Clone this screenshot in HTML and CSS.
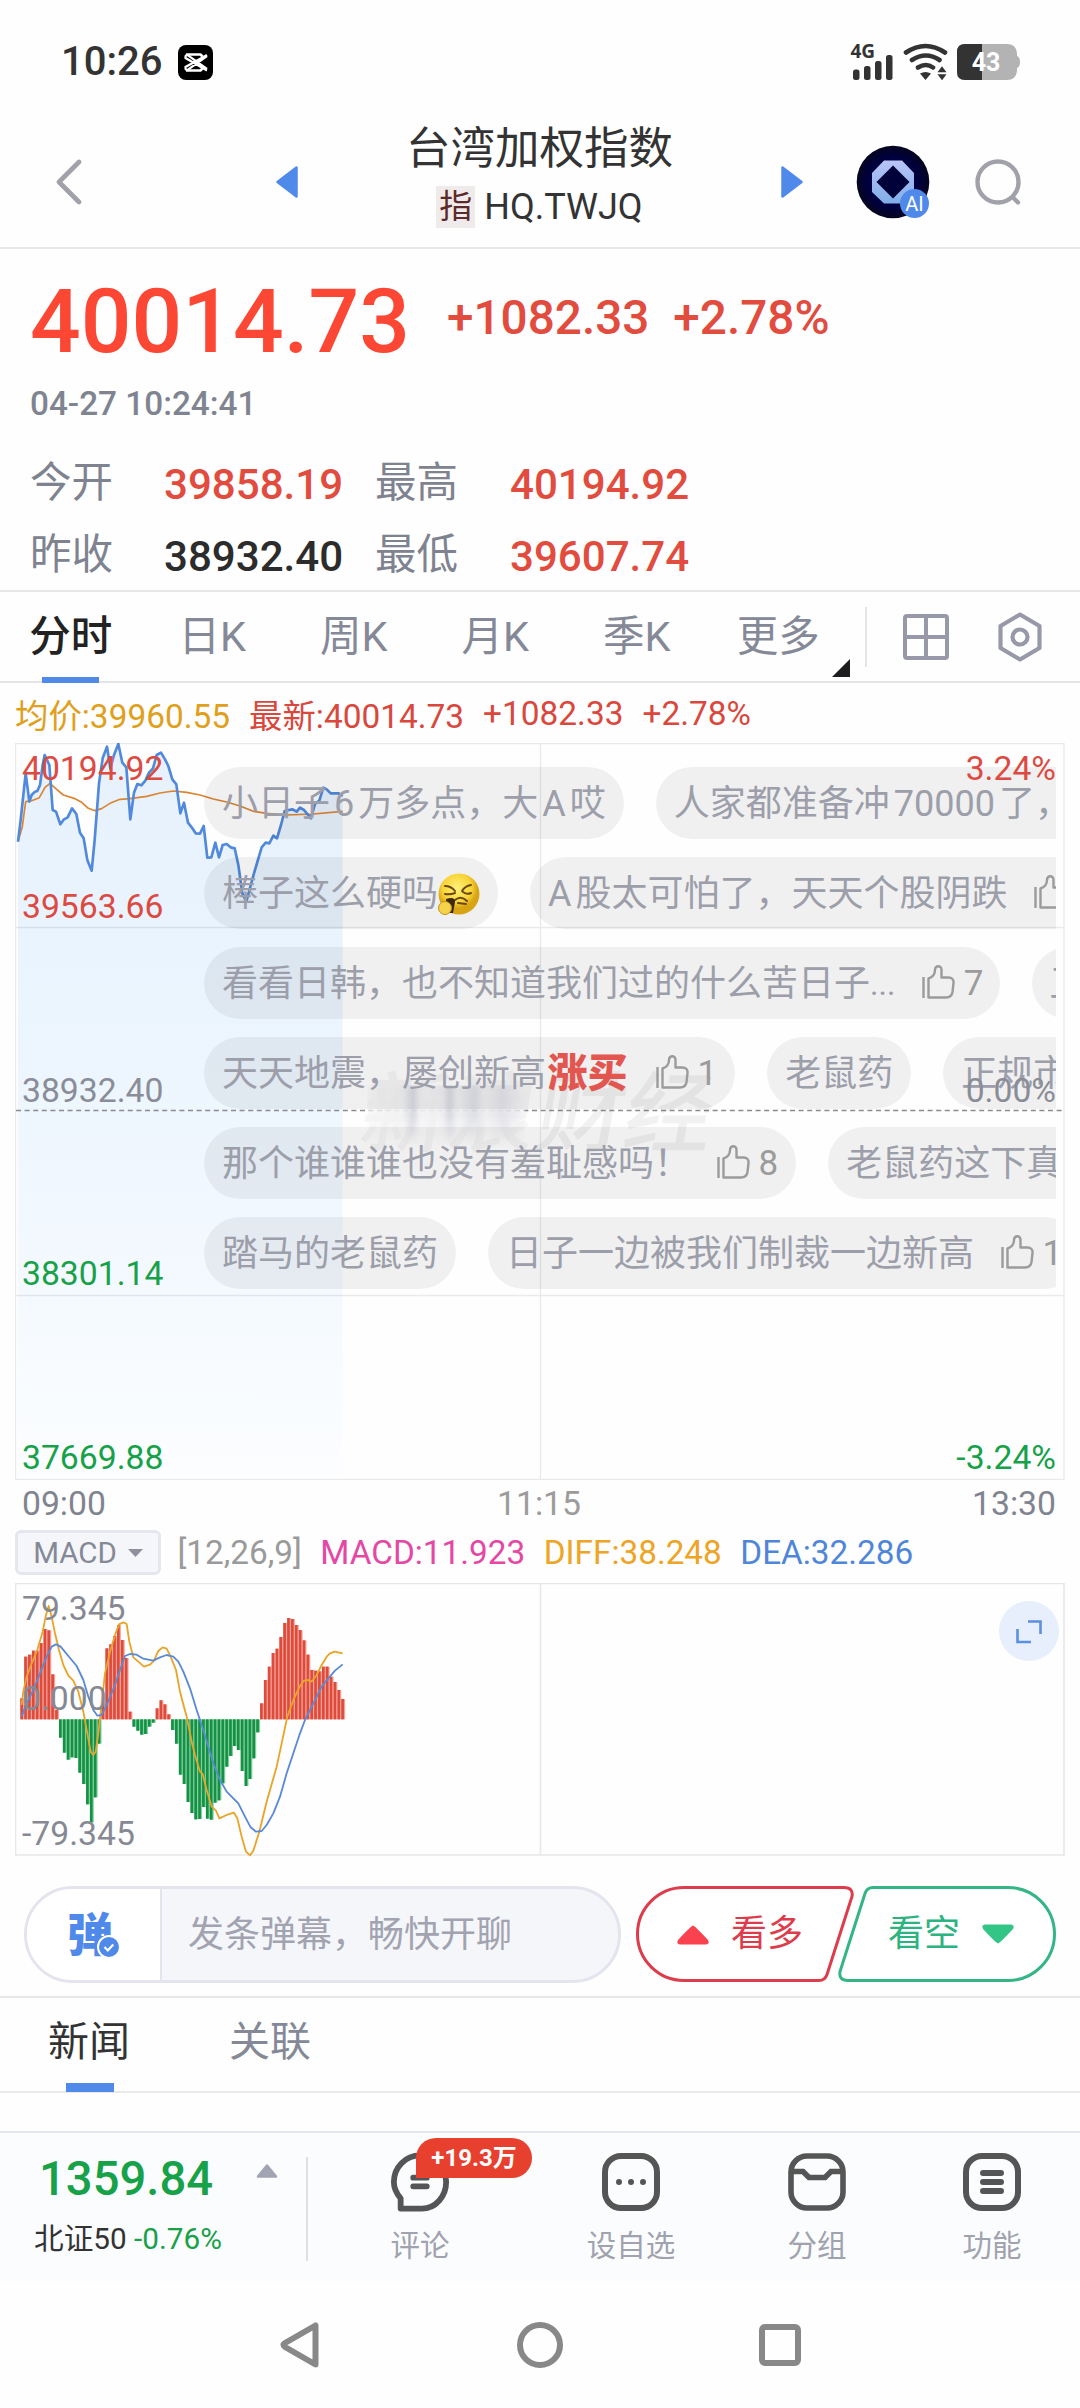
FILE: index.html
```html
<!DOCTYPE html>
<html lang="zh-CN">
<head>
<meta charset="utf-8">
<title>台湾加权指数</title>
<link rel="stylesheet" href="styles.css">
</head>
<body>
<svg width="0" height="0" class="defs">
  <symbol id="thumb" viewBox="0 0 33 34">
    <path d="M1.500 12v21M6.500 13.500v19H24c3.500 0 6-2 6.500-5.500l1-9c.4-3.500-1.500-5.500-5-5.500H19.500V5c0-5-6.500-5-6.500 0 0 4-2 7-6.500 8.500z" fill="none" stroke="#9b9b9b" stroke-width="2.400" stroke-linejoin="round"/>
  </symbol>
</svg>
<div class="phone">
  <div class="status">
    <span class="clock">10:26</span>
    <svg class="capcut" width="35" height="35" viewBox="0 0 35 35"><rect width="35" height="35" rx="8"/><path d="M29 11L10 24.500a1.500 1.500 0 0 1-2.500-1.200V22l21.500-12M29 24L10 10.500a1.500 1.500 0 0 0-2.500 1.200V13L29 25.500" fill="none" stroke="#fff" stroke-width="2.200"/><path d="M8 9.500h14.500l2 2M8 25.500h14.500l2-2" fill="none" stroke="#fff" stroke-width="2.600"/></svg>
    <span class="grow"></span>
    <svg width="170" height="40" viewBox="850 42 170 40">
      <text x="850.500" y="58" class="net">4G</text>
      <g fill="#333"><rect x="853" y="69.500" width="6.500" height="10.500" rx="2.500"/><rect x="864" y="66" width="6.500" height="14" rx="2.500"/><rect x="875" y="61" width="6.500" height="19" rx="2.500"/><rect x="886" y="55" width="6.500" height="25" rx="2.500"/></g>
      <g fill="none" stroke="#333" stroke-width="4.600" stroke-linecap="round"><path d="M906 52.500q19.500-13 39 0M912 60q14-9 27.500 0M918 67.500q8-5 15 0"/></g>
      <path d="M920 73.500q5.500-3 11 0l-5.500 6.500zM942 72l5-6 5 6zM942 74l5 6 5-6z" transform="translate(-5 0)" fill="#333" class="hide"/>
      <path d="M920 73.500q5.500-3 11 0l-5.500 6.500zM937.500 72.200l4.500-6 4.500 6zM937.500 74.200l4.500 6 4.500-6z" fill="#333"/>
      <path d="M965 44h42q9 0 10 9v3q3 1 3 6t-3 6v3q-1 9-10 9h-42q-8 0-8-8V52q0-8 8-8z" fill="#b3b3b3"/>
      <path d="M982 44h-17q-8 0-8 8v20q0 8 8 8h17z" fill="#333"/>
      <text x="986" y="71" class="batt">43</text>
    </svg>
  </div>

  <header class="head">
    <svg class="back" width="28" height="46" viewBox="0 0 28 46"><path d="M24 3L4 23l20 20" fill="none" stroke="#a0a1a9" stroke-width="4.600" stroke-linecap="round" stroke-linejoin="round"/></svg>
    <svg class="prev" width="22" height="32" viewBox="0 0 22 32"><path d="M20.500 1.500v29L1.500 16z" fill="#4f8aea" stroke="#4f8aea" stroke-width="2.500" stroke-linejoin="round"/></svg>
    <div class="name">
      <h1>台湾加权指数</h1>
      <div class="code"><i>指</i>HQ.TWJQ</div>
    </div>
    <svg class="next" width="22" height="32" viewBox="0 0 22 32"><path d="M1.500 1.500v29L20.500 16z" fill="#4f8aea" stroke="#4f8aea" stroke-width="2.500" stroke-linejoin="round"/></svg>
    <svg class="ai" width="74" height="74" viewBox="0 0 74 74">
      <defs><linearGradient id="oct" x2="0" y2="1"><stop stop-color="#b9c4f8"/><stop offset="1" stop-color="#80aee8"/></linearGradient><radialGradient id="sky"><stop stop-color="#02023c"/><stop offset=".7" stop-color="#00003f"/><stop offset="1" stop-color="#05051f"/></radialGradient></defs>
      <circle cx="37" cy="37" r="36.300" fill="url(#sky)"/>
      <path d="M28 15.500h18L58 28v19L46 58.500H28L16 47V28z" fill="url(#oct)"/><path d="M37 20.500L53.500 37 37 53.500 20.500 37z" fill="#02023a"/>
      <circle cx="58.500" cy="58.500" r="14.500" fill="#4f8aea"/><text x="58.500" y="65.500" class="aitxt">AI</text>
    </svg>
    <svg class="search" width="48" height="48" viewBox="0 0 48 48"><g fill="none" stroke="#a0a1a9" stroke-width="4.400" stroke-linecap="round"><circle cx="24" cy="24" r="20.500"/><path d="M39 39.500l5 5"/></g></svg>
  </header>

  <section class="quote">
    <div class="top"><b>40014.73</b><span>+1082.33</span><span>+2.78%</span></div>
    <time>04-27 10:24:41</time>
    <dl>
      <dt>今开</dt><dd>39858.19</dd><dt>最高</dt><dd>40194.92</dd>
      <dt>昨收</dt><dd class="dark">38932.40</dd><dt>最低</dt><dd>39607.74</dd>
    </dl>
  </section>

  <nav class="tabs">
    <a class="on">分时</a><a>日K</a><a>周K</a><a>月K</a><a>季K</a><a>更多</a>
    <svg class="corner" width="18" height="18"><path d="M18 0v18H0z" fill="#1d1d1f"/></svg>
    <s></s>
    <svg class="grid" width="48" height="48" viewBox="0 0 48 48"><path d="M5 3h38q2 0 2 2v38q0 2-2 2H5q-2 0-2-2V5q0-2 2-2zM24 3v42M3 24h42" fill="none" stroke="#9799a8" stroke-width="4"/></svg>
    <svg class="hex" width="46" height="50" viewBox="0 0 46 50"><g fill="none" stroke="#9799a8" stroke-width="4.200" stroke-linejoin="round"><path d="M23 2.500L42.500 14v22L23 47.500 3.500 36V14z"/><circle cx="23" cy="25" r="7.500"/></g></svg>
  </nav>

  <div class="legend"><span class="gold">均价:39960.55</span><span>最新:40014.73</span><span>+1082.33</span><span>+2.78%</span></div>

  <section class="chart">
    <svg width="1050" height="737" viewBox="15 743 1050 737">
      <defs><linearGradient id="area" gradientUnits="userSpaceOnUse" x1="0" y1="0" x2="0" y2="2240"><stop stop-color="#e6f1fc"/><stop offset=".3" stop-color="#e9f4fe"/><stop offset=".75" stop-color="#f4f9ff"/><stop offset=".9" stop-color="#f9fcff"/><stop offset="1" stop-color="#fcfdff"/></linearGradient></defs>
      <g transform="translate(0 730) scale(.33333)" fill="none" stroke-linejoin="round">
        <path fill="url(#area)" d="M54,335 62,270 77,130 88,215 95,195 105,185 112,183 120,165 128,105 134,75 140,88 148,105 158,240 168,245 181,283 192,268 203,262 216,235 229,252 240,308 251,325 262,390 275,422 284,330 297,160 308,85 321,50 331,115 342,75 355,42 367,98 379,112 391,268 402,188 412,162 424,166 436,152 447,128 459,115 470,75 483,68 495,88 505,108 517,148 529,163 541,250 552,218 564,278 575,292 587,310 600,311 611,288 622,383 634,382 646,338 657,382 668,345 680,342 692,352 704,355 715,405 727,490 739,515 751,470 762,430 785,352 797,338 808,340 820,317 831,325 843,285 854,243 866,240 878,238 890,245 900,233 912,240 933,265 945,222 958,212 970,173 980,178 992,190 1004,190 1016,190 1028,198V2240H54z"/>
        <path stroke="#db8532" stroke-width="5" d="M54,335 67,290 77,215 95,212 118,203 135,172 150,160 170,178 190,195 225,206 245,217 265,235 285,242 305,236 330,220 360,208 390,206 440,199 480,189 520,183 560,187 600,195 640,207 680,216 720,228 760,244 800,250 860,255 940,252 1028,244"/>
        <path stroke="#5189dc" stroke-width="8" d="M54,335 62,270 77,130 88,215 95,195 105,185 112,183 120,165 128,105 134,75 140,88 148,105 158,240 168,245 181,283 192,268 203,262 216,235 229,252 240,308 251,325 262,390 275,422 284,330 297,160 308,85 321,50 331,115 342,75 355,42 367,98 379,112 391,268 402,188 412,162 424,166 436,152 447,128 459,115 470,75 483,68 495,88 505,108 517,148 529,163 541,250 552,218 564,278 575,292 587,310 600,311 611,288 622,383 634,382 646,338 657,382 668,345 680,342 692,352 704,355 715,405 727,490 739,515 751,470 762,430 785,352 797,338 808,340 820,317 831,325 843,285 854,243 866,240 878,238 890,245 900,233 912,240 933,265 945,222 958,212 970,173 980,178 992,190 1004,190 1016,190 1028,198"/>
      </g>
      <path d="M15.500 743.500h1048.500v736H15.500zM15.500 927.500h1048.500M15.500 1295.500h1048.500M540.500 743.500v736" fill="none" stroke="#000" stroke-opacity=".08" stroke-width="1.400"/>
      <path d="M16 1110.500h1048" stroke="#8a8a90" stroke-width="1.600" stroke-dasharray="5 3.600"/>
    </svg>
    <div class="mark"><span class="faint">新浪</span><span>财经</span><i></i></div>
    <div class="danmu">
      <div><p>小日子<u>6</u>万多点，大<u>A</u>哎</p><p>人家都准备冲<u>70000</u>了，<em>这</em></p></div>
      <div><p>棒子这么硬吗<svg class="emoji" width="42" height="42" viewBox="0 0 42 42"><defs><radialGradient id="face" cx=".45" cy=".35"><stop stop-color="#fff27a"/><stop offset=".7" stop-color="#f8d437"/><stop offset="1" stop-color="#d9a413"/></radialGradient></defs><circle cx="21" cy="21" r="20.500" fill="url(#face)"/><g fill="none" stroke="#6c4710" stroke-width="2" stroke-linecap="round"><path d="M7 13q6 0 10 5M33 12q-6 1-9 6M7 21q5 1 10-1M25 19q4 3 8 1M17 27q6-5 12 1M20 30l8 1"/></g><path d="M8 26q9-3 9 3l-2 11H9z" fill="#3b2712"/><circle cx="7" cy="35" r="6.500" fill="#f5d24a" stroke="#c29019"/></svg></p><p><u class="first">A</u>股太可怕了，天天个股阴跌<svg class="like"><use href="#thumb"/></svg><b>3</b></p></div>
      <div><p>看看日韩，也不知道我们过的什么苦日子<tt>...</tt><svg class="like"><use href="#thumb"/></svg><b>7</b></p><p>卫星</p></div>
      <div><p>天天地震，屡创新高<strong>涨买</strong><svg class="like"><use href="#thumb"/></svg><b>1</b></p><p>老鼠药</p><p>正规市场</p></div>
      <div><p>那个谁谁谁也没有羞耻感吗！<svg class="like"><use href="#thumb"/></svg><b>8</b></p><p>老鼠药这下真香</p></div>
      <div><p>踏马的老鼠药</p><p>日子一边被我们制裁一边新高<svg class="like"><use href="#thumb"/></svg><b>1</b></p></div>
    </div>
    <ul class="ylab">
      <li class="red">40194.92</li><li class="red">39563.66</li><li>38932.40</li><li class="green">38301.14</li><li class="green">37669.88</li>
    </ul>
    <ul class="plab"><li class="red">3.24%</li><li>0.00%</li><li class="green">-3.24%</li></ul>
  </section>
  <div class="times"><span>09:00</span><span>11:15</span><span>13:30</span></div>

  <div class="ind">
    <div class="pick">MACD<svg width="15" height="8"><path d="M0 0h15l-7.500 8z" fill="#8e909c"/></svg></div>
    <span>[12,26,9]</span><span class="pink">MACD:11.923</span><span class="orange">DIFF:38.248</span><span class="blue">DEA:32.286</span>
  </div>

  <section class="macd">
    <svg width="1050" height="274" viewBox="15 1583 1050 274">
      <path d="M15.500 1583.500h1048.500v271.500H15.500zM540.500 1583.500v271" fill="none" stroke="#e7e7e9" stroke-width="1.600"/>
      <g transform="translate(0 1570) scale(.33333)" fill="none" stroke-width="5.500" stroke-linejoin="round">
        <g id="bars"></g>
        <path stroke="#e8a529" d="M65,405 70,365 80,320 95,280 112,240 128,185 138,135 146,108 155,140 165,190 177,240 190,285 205,317 220,332 235,365 250,425 262,490 272,545 280,555 287,545 295,490 305,400 315,310 330,245 345,195 357,163 370,157 380,162 388,215 400,262 415,275 432,290 450,284 462,272 475,243 488,232 500,236 512,260 528,300 540,365 560,440 575,515 585,555 600,605 608,612 620,660 635,710 648,722 658,745 680,735 702,728 712,745 725,800 738,845 750,856 760,842 778,785 800,695 830,590 845,520 862,440 880,390 900,348 912,332 925,330 935,335 950,315 965,285 980,260 990,250 1004,245 1028,250"/>
        <path stroke="#5a8ad6" d="M65,440 80,400 100,360 120,310 140,260 155,230 168,223 182,230 205,258 230,288 250,330 265,380 280,420 292,437 305,435 320,405 345,345 360,300 375,258 390,252 410,254 430,266 460,272 480,262 500,255 520,260 535,275 550,305 570,355 590,420 610,480 625,530 640,580 660,630 680,665 700,685 715,700 735,740 752,772 768,785 785,783 800,765 820,730 840,680 860,610 880,550 900,490 915,450 940,400 965,350 985,325 1005,302 1028,283"/>
      </g>
    </svg>
    <ul class="mlab"><li>79.345</li><li>0.000</li><li>-79.345</li></ul>
    <svg class="expand" width="60" height="60" viewBox="0 0 60 60"><circle cx="30" cy="30" r="30" fill="#e6effb"/><path d="M29 20.500h12.500V33M18.500 28v13H32" fill="none" stroke="#5b8fe0" stroke-width="2.600"/></svg>
  </section>

  <div class="actions">
    <div class="send">
      <div class="dm"><span>弹</span><svg width="24" height="24" viewBox="0 0 24 24"><circle cx="12" cy="12" r="11" fill="#4f8aea" stroke="#fff" stroke-width="2"/><path d="M7.500 12l3.300 3.500 5.500-6" fill="none" stroke="#fff" stroke-width="2.200"/></svg></div>
      <div class="hint">发条弹幕，畅快开聊</div>
    </div>
    <div class="vote bull">
      <svg width="218" height="96" viewBox="0 0 218 96"><path d="M48 1.500h160q9.500 0 8 9l-25 78q-2 6-8 6H48a46.500 46.500 0 0 1 0-93z" fill="#fff" stroke="#dc3c4b" stroke-width="3"/></svg>
      <div><svg width="34" height="21"><path d="M17 1.500Q18.500 1.500 32 16q2 4-2 4.500H4q-4-.5-2-4.500Q15.500 1.500 17 1.500z" fill="#f9414f"/></svg><span>看多</span></div>
    </div>
    <div class="vote bear">
      <svg width="218" height="96" viewBox="0 0 218 96"><path d="M170 94.500H10q-9.500 0-8-9l25-78q2-6 8-6H170a46.500 46.500 0 0 1 0 93z" fill="#fff" stroke="#33b585" stroke-width="3"/></svg>
      <div><span>看空</span><svg width="34" height="21"><path d="M17 19.500Q15.500 19.500 2 5 0 1 4 .5h26q4 .5 2 4.500Q18.500 19.500 17 19.500z" fill="#32c586"/></svg></div>
    </div>
  </div>

  <nav class="news"><a class="on">新闻</a><a>关联</a></nav>

  <footer class="bar">
    <div class="idx">
      <div><b>1359.84</b><svg width="22" height="14"><path d="M11 1.500L20 12.500H2z" fill="#a2a3b3" stroke="#a2a3b3" stroke-width="2.500" stroke-linejoin="round"/></svg></div>
      <p>北证50 <span>-0.76%</span></p>
    </div>
    <s></s>
    <div class="it c1"><svg width="62" height="62" viewBox="0 0 62 62" fill="none" stroke="#555" stroke-width="6"><path d="M11 58.500V48C6 42 4 37 4 31a26.500 27 0 0 1 54 0c0 15-11 27.500-25 27.500z" stroke-linejoin="round"/><path d="M24 26.500h14M24 35.500h14" stroke-linecap="round"/></svg><span>评论</span><em>+19.3万</em></div>
    <div class="it c2"><svg width="58" height="58" viewBox="0 0 58 58"><rect x="3" y="3" width="52" height="52" rx="16" fill="none" stroke="#555" stroke-width="6"/><g fill="#555"><circle cx="17" cy="29" r="3"/><circle cx="29" cy="29" r="3"/><circle cx="41" cy="29" r="3"/></g></svg><span>设自选</span></div>
    <div class="it c3"><svg width="58" height="58" viewBox="0 0 58 58" fill="none" stroke="#555" stroke-width="5.600"><rect x="3" y="3" width="52" height="52" rx="16"/><path d="M4 18.500h11l6 6h16l6-6h11"/></svg><span>分组</span></div>
    <div class="it c4"><svg width="58" height="58" viewBox="0 0 58 58" fill="none" stroke="#555" stroke-width="6"><rect x="3" y="3" width="52" height="52" rx="16"/><path d="M20 20h18M20 29h18M20 38h18" stroke-linecap="round"/></svg><span>功能</span></div>
  </footer>

  <div class="sys">
    <svg width="42" height="46" viewBox="0 0 42 46" fill="none" stroke="#888" stroke-width="6"><path d="M36.500 3.500v39L6 25q-3-2 0-4z" stroke-linejoin="round"/></svg>
    <svg width="46" height="46" viewBox="0 0 46 46" fill="none" stroke="#888" stroke-width="6"><circle cx="23" cy="23" r="20"/></svg>
    <svg width="42" height="42" viewBox="0 0 42 42" fill="none" stroke="#888" stroke-width="6"><rect x="3" y="3" width="36" height="36" rx="3"/></svg>
  </div>
</div>
<script src="script.js"></script>
</body>
</html>
```
FILE: styles.css
```css
* { box-sizing: border-box; margin: 0; padding: 0; }
body { width: 1080px; background: #fff; font-family: Roboto, "Noto Sans CJK SC", sans-serif; color: #333; }
svg { display: block; flex: none; }
.defs { position: absolute; }
.hide { display: none; }
ul { list-style: none; }
i, em { font-style: normal; }
s, u { text-decoration: none; }
.phone { width: 1080px; height: 2408px; display: flex; flex-direction: column; overflow: hidden; background: #fefefe; }
.phone > * { flex: none; }
.grow { flex: 1; }

.status { height: 114px; display: flex; align-items: center; padding: 10px 60px 0 61px; }
.clock { font-size: 40px; font-weight: 500; width: 117px; line-height: 40px; }
.net { font: 700 19px "Noto Sans", sans-serif; fill: #333; }
.batt { font: 700 25px Roboto, sans-serif; fill: #fff; text-anchor: middle; }
.aitxt { font: 400 20px Roboto, sans-serif; fill: #fff; text-anchor: middle; }

.head { height: 135px; border-bottom: 2px solid #e9e9ea; display: flex; align-items: center; padding: 2px 58px 0 55px; }
.prev { margin-left: 193px; }
.name { flex: 1; text-align: center; padding-bottom: 17px; }
.name h1 { font-size: 44.500px; font-weight: 400; line-height: 60px; }
.code { font-size: 36px; line-height: 42px; display: flex; justify-content: center; gap: 9px; margin-top: 7px; }
.code i { font-size: 33px; width: 39px; background: #f0ebeb; color: #5c2a2a; }
.next { margin-right: 53px; }
.search { margin-left: 44px; }

.quote { height: 343px; border-bottom: 2px solid #e7e7e8; padding-left: 30px; color: #e24c3f; }
.top { display: flex; align-items: center; height: 120px; padding-top: 26px; font-weight: 500; font-size: 47.700px; line-height: 80px; }
.top b { font-size: 89.300px; font-weight: 500; color: #fb4733; width: 417px; line-height: 94px; }
.top span { padding-bottom: 8px; margin-right: 24px; }
.quote time { display: block; font-size: 33.300px; font-weight: 500; color: #7f8590; line-height: 40px; margin-top: 15px; }
.quote dl { display: grid; grid-template-columns: 134px 211px 135px 260px; grid-auto-rows: 72px; margin-top: 23px; font-size: 41.500px; line-height: 72px; }
.quote dt { color: #7f8390; }
.quote dd { font-weight: 500; padding-top: 2px; font-size: 42.100px; }
.quote .dark { color: #2c2c2c; }

.tabs { height: 91px; border-bottom: 2px solid #e4e4e6; display: flex; align-items: center; font-size: 41.500px; color: #858997; }
.tabs a { width: 141.500px; text-align: center; line-height: 62px; white-space: nowrap; }
.tabs a.on { font-weight: 500; color: #222; position: relative; }
.tabs .on::after { content: ""; position: absolute; left: 42px; bottom: -15px; width: 57px; height: 6px; background: #4f8aea; }
.corner { margin: 67px 15px 0 -17px; align-self: flex-start; }
.tabs s { width: 2px; height: 60px; background: #e4e4e6; }
.grid { margin-left: 35px; }
.hex { margin-left: 47px; }

.legend { height: 60px; display: flex; align-items: center; gap: 19px; padding: 0 0 0 15px; font-size: 33.400px; color: #d9473d; }
.legend .gold { color: #e0a01c; }

.chart { position: relative; height: 737px; margin-left: 15px; }
.chart > svg { position: absolute; left: 0; top: 0; }
.mark { position: absolute; left: 348px; top: 320px; display: flex; font: 500 88px/88px "Noto Sans CJK SC", sans-serif; color: rgba(0,0,0,.05); transform: skewX(-10deg); }
.mark .faint { color: rgba(0,0,0,.035); }
.mark i { position: absolute; left: 6px; top: 22px; width: 158px; height: 62px; transform: skewX(10deg); filter: blur(2px);
  background: linear-gradient(90deg, rgba(245,245,246,.8), #f1f1f2 20%, #f4f4f5 22%, #d3d4de 29%, #f2f2f3 33%, #efeff1 48%, #d0d1dc 52%, #f1f1f2 57%, #d9dae2 68%, #f0f0f1 74%, #e0e0e8 86%, rgba(246,246,246,.8)); opacity: .9; -webkit-mask: linear-gradient(#000 50%, transparent); }
.danmu { position: absolute; left: 189px; top: 24px; width: 852px; overflow: hidden; display: grid; row-gap: 18px; }
.danmu div { display: flex; gap: 32px; }
.danmu p { flex: none; height: 72px; border-radius: 36px; background: rgba(0,0,0,.055); padding: 2px 18px 0; font-size: 36px; line-height: 70px; color: #9c9eaa; white-space: nowrap; display: flex; align-items: center; }
.danmu u { margin: 0 4px; }
.danmu .first { margin-left: 0; }
.danmu tt { font: inherit; font-size: 32px; }
.danmu strong { font-weight: 900; font-size: 40px; color: #e2564f; margin: 0 1.500px; }
.like { width: 33px; height: 34px; margin: -5px 9px 0 26.500px; }
.danmu b { font-weight: 400; font-size: 35px; color: #9b9b9b; }
.danmu div:nth-child(3) p { padding-right: 16px; }
.ylab, .plab, .mlab { position: absolute; top: 0; font-size: 33.700px; line-height: 36px; color: #8a8d97; }
.ylab { left: 7px; top: 8px; }
.ylab li { height: 184px; }
.ylab li:first-child { height: 138px; }
.ylab li:nth-child(3) { height: 183px; }
.plab { right: 24px; top: 8px; text-align: right; }
.plab li:first-child { height: 322px; }
.plab li:nth-child(2) { height: 367px; }
.ylab, .plab { height: 0; }
.red { color: #dd4a42; }
.green { color: #17a148; }
.times { height: 50px; display: flex; justify-content: space-between; align-items: center; padding: 0 24px 3px 22px; font-size: 33.700px; color: #80848f; }
.times span:nth-child(2) { color: #9b9b9b; }

.ind { height: 45px; display: flex; align-items: center; padding-left: 15px; font-size: 33.300px; color: #9a9a9a; gap: 18.500px; }
.pick { width: 146px; height: 45px; border: 3px solid #e6e7ee; border-radius: 6px; background: #f5f6fa; font-size: 29.500px; color: #858997; display: flex; align-items: center; justify-content: center; gap: 11px; margin-right: -2px; }
.pink { color: #e548a4; } .orange { color: #eea424; } .blue { color: #4f86d9; }

.macd { position: relative; height: 274px; margin: 8px 0 0 15px; }
.mlab { left: 7px; top: 8px; color: #868994; font-size: 33.700px; }
.mlab li { height: 90px; }
.mlab li:nth-child(2) { height: 135px; }
.expand { position: absolute; left: 984px; top: 18px; }

.actions { height: 141px; border-bottom: 2px solid #e7e7e8; display: flex; align-items: flex-start; padding: 29px 0 0 24px; }
.send { width: 597px; height: 97px; border: 3px solid #e3e4ee; border-radius: 49px; display: flex; overflow: hidden; background: #f5f6fa; margin-right: 15px; }
.dm { width: 135px; background: #fff; border-right: 2px solid #e3e4ee; position: relative; padding: 1px 0 0 40px; font-size: 46px; font-weight: 900; color: #4f8aea; line-height: 90px; }
.dm svg { position: absolute; left: 70px; top: 46px; }
.hint { font-size: 36px; color: #a1a3b0; line-height: 92px; padding-left: 26px; }
.vote { position: relative; width: 218px; height: 96px; font-size: 36px; }
.vote > svg { position: absolute; }
.vote div { position: relative; height: 96px; display: flex; align-items: center; gap: 21px; padding-left: 40px; line-height: 96px; }
.bull { color: #dc3c4b; }
.bear { margin-left: -16px; color: #2cb380; }
.bear div { padding-left: 50px; }

.news { height: 95px; border-bottom: 2px solid #e9e9ea; display: flex; padding-left: 48px; font-size: 41px; line-height: 89px; color: #858997; gap: 99px; }
.news .on { color: #333; position: relative; }
.news .on::after { content: ""; position: absolute; left: 18px; top: 85px; width: 48px; height: 9px; background: #4f8aea; }

.bar { margin-top: 38px; height: 150px; border-top: 2px solid #e3e5ea; background: #fbfcfe; display: flex; align-items: flex-start; }
.idx { width: 306px; padding: 21px 0 0 39px; }
.idx div { display: flex; height: 52px; line-height: 50px; }
.idx b { font-size: 47.200px; font-weight: 500; color: #17a148; width: 217px; }
.idx svg { margin-top: 10px; }
.idx p { font-size: 29.700px; line-height: 40px; margin: 13px 0 0 -5px; white-space: nowrap; }
.idx span { color: #17a148; }
.bar s { width: 2px; height: 104px; background: #e0e0e4; margin-top: 24px; }
.it { position: relative; width: 120px; display: flex; flex-direction: column; align-items: center; padding-top: 19px; font-size: 29.500px; color: #a0a2ad; }
.it svg { height: 60px; }
.it span { line-height: 40px; margin-top: 14px; }
.c1 { margin-left: 52px; } .c2 { margin-left: 91px; } .c3 { margin-left: 66px; } .c4 { margin-left: 55px; }
.it em { position: absolute; left: 56px; top: 5px; width: 116px; height: 40px; border-radius: 20px 20px 20px 0; background: #e8402e; color: #fff; font-size: 24px; font-weight: 700; line-height: 40px; text-align: center; }

.sys { height: 127px; display: flex; align-items: center; justify-content: space-between; padding: 0 279px 0 279px; }
```
FILE: script.js
```js
// Histogram ends on a 3x grid; the zero line sits at 448.
const ends = [385,260,254,242,242,219,177,181,313,420,503,548,569,562,564,608,642,703,757,682,521,400,235,223,198,165,210,264,425,470,482,494,492,470,458,415,391,403,433,480,521,614,642,696,729,748,747,711,746,749,698,691,640,590,558,528,540,603,648,627,565,487,400,330,290,249,236,201,159,144,147,165,180,211,254,300,302,304,290,290,320,336,360,387];
const group = document.getElementById('bars');
ends.forEach((end, i) => {
  const up = end < 448;
  for (const [w, color] of [[11.6, up ? '#f6a198' : '#7fd09c'], [8, up ? '#dd4b3b' : '#149145']]) {
    const bar = document.createElementNS('http://www.w3.org/2000/svg', 'rect');
    bar.setAttribute('x', 61 + i * 11.6);
    bar.setAttribute('y', Math.min(end, 448));
    bar.setAttribute('width', w);
    bar.setAttribute('height', Math.abs(end - 448));
    bar.setAttribute('fill', color);
    group.append(bar);
  }
});
```
